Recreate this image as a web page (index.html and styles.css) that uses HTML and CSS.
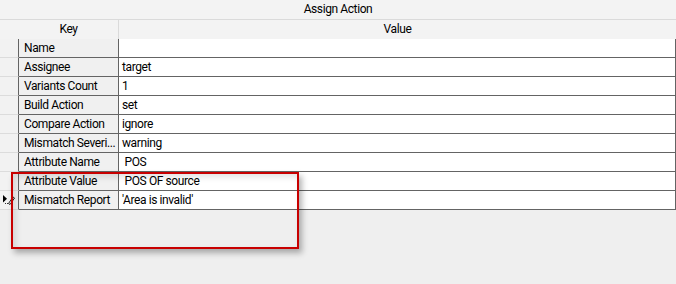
FILE: index.html
```html
<!DOCTYPE html>
<html lang="en">
<head>
    <meta charset="UTF-8">
    <title>Assign Action</title>
    <link rel="stylesheet" href="styles.css">
</head>
<body>
    <div class="panel">
        <div class="panel-title">Assign Action</div>

        <div class="grid">
            <div class="col-head corner"></div>
            <div class="col-head key-head">Key</div>
            <div class="col-head">Value</div>

            <div class="row-head"></div>
            <div class="cell key">Name</div>
            <div class="cell val"></div>

            <div class="row-head"></div>
            <div class="cell key">Assignee</div>
            <div class="cell val">target</div>

            <div class="row-head"></div>
            <div class="cell key">Variants Count</div>
            <div class="cell val">1</div>

            <div class="row-head"></div>
            <div class="cell key">Build Action</div>
            <div class="cell val">set</div>

            <div class="row-head"></div>
            <div class="cell key">Compare Action</div>
            <div class="cell val">ignore</div>

            <div class="row-head"></div>
            <div class="cell key">Mismatch Severi...</div>
            <div class="cell val">warning</div>

            <div class="row-head"></div>
            <div class="cell key">Attribute Name</div>
            <div class="cell val"> POS</div>

            <div class="row-head"></div>
            <div class="cell key">Attribute Value</div>
            <div class="cell val"> POS OF source</div>

            <div class="row-head current">
                <svg width="18" height="18" viewBox="0 0 18 18">
                    <polygon points="3,4 3,11.5 7,7.7" fill="#000"/>
                    <path d="M8.5 12.5 L13 6 L14.5 7 L10 13.5 Z" fill="none" stroke="#222" stroke-width="1"/>
                    <rect x="5" y="12" width="1" height="1" fill="#333"/>
                    <rect x="7" y="12" width="1" height="1" fill="#333"/>
                </svg>
            </div>
            <div class="cell key">Mismatch Report</div>
            <div class="cell val">'Area is invalid'</div>
        </div>

        <div class="highlight"></div>
    </div>
</body>
</html>
```

FILE: styles.css
```css
body {
    margin: 0;
    background-color: #efefef;
    font-family: Roboto, "Liberation Sans", Arial, sans-serif;
    font-size: 12px;
    letter-spacing: -0.4px;
    color: #000;
}
.panel {
    position: relative;
    width: 676px;
    height: 284px;
}
.panel-title {
    height: 19px;
    line-height: 19px;
    text-align: center;
    background-color: #f3f3f3;
    border-bottom: 1px solid #dadada;
}
.grid {
    display: grid;
    grid-template-columns: 19px 100px 557px;
    grid-auto-rows: 19px;
}
.col-head {
    height: 20px;
    line-height: 19px;
    text-align: center;
    background-color: #f3f3f3;
    border-bottom: 1px solid #dadada;
}
.key-head {
    border-right: 1px solid #dadada;
}
.grid > .col-head {
    margin-bottom: -1px;
}
.row-head {
    box-sizing: border-box;
    background-color: #f2f2f2;
    border-bottom: 1px solid #dcdcdc;
    border-right: 1px solid #646464;
}
.row-head svg {
    display: block;
}
.cell {
    box-sizing: border-box;
    line-height: 18px;
    white-space: pre;
    overflow: hidden;
    border-bottom: 1px solid #646464;
    border-right: 1px solid #646464;
}
.key {
    padding-left: 5px;
    background-color: #f0f0f0;
}
.val {
    padding-left: 3px;
    background-color: #fff;
}
.highlight {
    position: absolute;
    left: 11px;
    top: 172px;
    width: 284px;
    height: 73px;
    border: 2px solid #c80000;
    box-shadow: 3px 4px 6px rgba(0, 0, 0, 0.3), inset 3px 3px 6px rgba(0, 0, 0, 0.12);
}
```
